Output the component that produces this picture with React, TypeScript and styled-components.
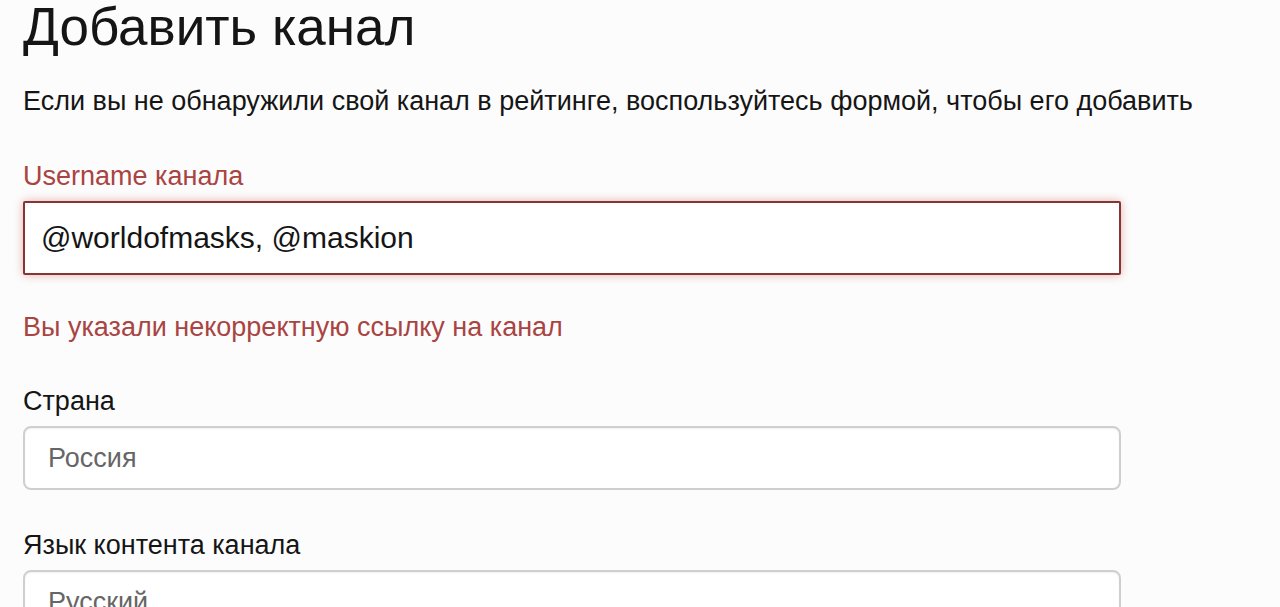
import styled, { createGlobalStyle } from 'styled-components';

const GlobalStyle = createGlobalStyle`
  html, body {
    margin: 0;
    padding: 0;
    background: #fcfcfc;
  }
  body {
    font-family: "Liberation Sans", Arial, sans-serif;
    color: #151515;
    overflow: hidden;
  }
`;

const Page = styled.div`
  padding: 0 159px 0 23px;
  height: 607px;
  overflow: hidden;
`;

const Title = styled.h1`
  margin: -2px 0 0;
  font-size: 53px;
  font-weight: 400;
  line-height: 58px;
  color: #151515;
`;

const Lead = styled.p`
  margin: 27px 0 0 0;
  font-size: 27px;
  line-height: 36px;
  color: #151515;
  white-space: nowrap;
`;

const Group = styled.div<{ $gap: number }>`
  margin-top: ${(p) => p.$gap}px;
  display: flex;
  flex-direction: column;
`;

const Label = styled.label<{ $error?: boolean }>`
  font-size: 27px;
  line-height: 36px;
  color: ${(p) => (p.$error ? '#a94442' : '#151515')};
  margin-bottom: 7px;
`;

const Input = styled.input<{ $error?: boolean }>`
  box-sizing: border-box;
  width: 100%;
  height: ${(p) => (p.$error ? 74 : 64)}px;
  padding: 0 ${(p) => (p.$error ? 16 : 23)}px;
  font-family: "Liberation Sans", Arial, sans-serif;
  font-size: ${(p) => (p.$error ? 30 : 27)}px;
  color: #151515;
  background: #fff;
  border: 2px solid ${(p) => (p.$error ? '#843534' : '#cfcfcf')};
  border-radius: ${(p) => (p.$error ? 2 : 8)}px;
  box-shadow: ${(p) =>
    p.$error ? '0 0 10px rgba(206, 84, 82, 0.45)' : 'inset 0 1px 2px rgba(0,0,0,0.06)'};
  outline: none;

  &::placeholder {
    color: #666;
  }
`;

const ErrorText = styled.div`
  margin-top: 34px;
  font-size: 27px;
  line-height: 36px;
  color: #a94442;
`;

export default function App() {
  return (
    <>
      <GlobalStyle />
      <Page>
        <Title>Добавить канал</Title>
        <Lead>
          Если вы не обнаружили свой канал в рейтинге, воспользуйтесь формой, чтобы его добавить
        </Lead>
        <Group $gap={39}>
          <Label $error>Username канала</Label>
          <Input $error defaultValue="@worldofmasks, @maskion" />
        </Group>
        <ErrorText>Вы указали некорректную ссылку на канал</ErrorText>
        <Group $gap={38}>
          <Label>Страна</Label>
          <Input placeholder="Россия" />
        </Group>
        <Group $gap={37}>
          <Label>Язык контента канала</Label>
          <Input placeholder="Русский" />
        </Group>
      </Page>
    </>
  );
}
